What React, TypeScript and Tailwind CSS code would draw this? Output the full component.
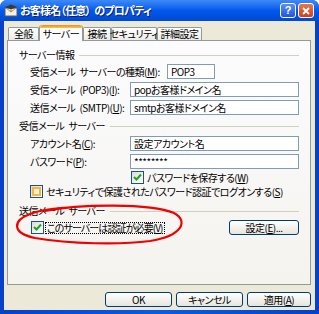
import React from "react";

function U({ c }: { c: string }) {
  return <span className="underline underline-offset-[1px]">{c}</span>;
}

function Sp() {
  return <span className="inline-block w-[4px]" />;
}

function Check({ checked, focus }: { checked?: boolean; focus?: boolean }) {
  return (
    <span className="relative flex-none w-[13px] h-[13px] border border-[#1C5180] bg-gradient-to-br from-[#DCDCD7] to-white flex items-center justify-center">
      {focus && <span className="absolute inset-[1px] border-2 border-[#F8B636]" />}
      {checked && (
        <svg width="9" height="9" viewBox="0 0 9 9" className="relative">
          <path d="M1 4 L3.5 6.5 L8 1.5" stroke="#21A121" strokeWidth="2" fill="none" />
        </svg>
      )}
    </span>
  );
}

function Input({ text, className }: { text: string; className?: string }) {
  return (
    <div className={"h-[15px] border border-[#7F9DB9] bg-white flex items-center px-[3px] leading-none whitespace-nowrap overflow-hidden " + (className ?? "")}>
      {text}
    </div>
  );
}

function Header({ children }: { children: React.ReactNode }) {
  return (
    <div className="h-[14px] flex items-center gap-[5px] leading-none">
      <span className="flex-none whitespace-nowrap">{children}</span>
      <span className="flex-1 h-px bg-[#D0D0BF]" />
    </div>
  );
}

function Btn({ children, className }: { children: React.ReactNode; className?: string }) {
  return (
    <div className={"h-[15px] border border-[#003C74] rounded-[3px] bg-gradient-to-b from-white to-[#E6E5DE] flex items-center justify-center leading-none whitespace-nowrap " + (className ?? "")}>
      {children}
    </div>
  );
}

function Tab({ label, w, selected }: { label: string; w: string; selected?: boolean }) {
  if (selected) {
    return (
      <div className={"relative z-10 -mb-px h-[16px] flex flex-col bg-[#FCFCFE] border-x border-[#919B9C] rounded-t-[3px] " + w}>
        <div className="h-[3px] rounded-t-[3px] bg-gradient-to-b from-[#E68B2C] to-[#FFC73C]" />
        <div className="flex-1 flex items-center justify-center leading-none pb-[1px] whitespace-nowrap">{label}</div>
      </div>
    );
  }
  return (
    <div className={"h-[13px] border border-b-0 border-[#919B9C] rounded-t-[2px] bg-gradient-to-b from-white to-[#ECEBE6] flex items-center justify-center leading-none whitespace-nowrap " + w}>
      {label}
    </div>
  );
}

export default function App() {
  return (
    <div className="relative w-[319px] h-[314px] bg-white font-['Noto_Sans_CJK_JP','Noto_Sans',sans-serif] [font-feature-settings:'palt'] text-black text-[10px] tracking-[-0.5px]">
      <div className="w-[319px] h-[314px] flex flex-col rounded-t-[7px] bg-gradient-to-r from-[#0840C8] via-[#0A5AE8] to-[#0840C8]">
        {/* title bar */}
        <div className="h-[21px] flex-none flex items-center rounded-t-[7px] bg-gradient-to-b from-[#3D8AF7] via-[#0058EE] to-[#0049D0] pl-[4px] pr-[5px]">
          <svg width="14" height="13" viewBox="0 0 14 13" className="flex-none">
            <rect x="1" y="4" width="12" height="8" fill="#F4F1E4" stroke="#5A5A5A" strokeWidth="1" />
            <path d="M2 4 L7 8 L12 4" stroke="#8A8A8A" fill="none" />
            <path d="M1 3 L7 0.5 L13 3 L7 5.5 Z" fill="#3A3A3A" />
            <rect x="6" y="5" width="2" height="2" fill="#E0B030" />
          </svg>
          <span className="ml-[2px] text-white font-bold text-[11px] tracking-[-0.8px] leading-none [text-shadow:1px_1px_0_#0A1E6E] whitespace-nowrap">
            お客様名（任意）<Sp />のプロパティ
          </span>
          <div className="ml-auto flex gap-[2px]">
            <div className="w-[16px] h-[15px] rounded-[3px] border border-white bg-gradient-to-b from-[#5A8EF5] to-[#1F55DF] flex items-center justify-center text-white text-[11px] font-bold leading-none tracking-normal font-['Liberation_Sans',sans-serif]">
              ?
            </div>
            <div className="w-[16px] h-[15px] rounded-[3px] border border-white bg-gradient-to-b from-[#E9774E] to-[#C8401C] flex items-center justify-center">
              <svg width="8" height="8" viewBox="0 0 8 8">
                <path d="M1 1 L7 7 M7 1 L1 7" stroke="white" strokeWidth="1.8" />
              </svg>
            </div>
          </div>
        </div>

        {/* client */}
        <div className="flex-1 mx-[4px] mb-[4px] bg-[#ECE9D8] flex flex-col pl-[3px] pr-[4px] pt-[4px]">
          {/* tabs */}
          <div className="h-[15px] flex items-end pl-[1px]">
            <Tab label="全般" w="w-[31px]" />
            <Tab label="サーバー" w="w-[44px]" selected />
            <Tab label="接続" w="w-[28px]" />
            <Tab label="セキュリティ" w="w-[46px]" />
            <Tab label="詳細設定" w="w-[45px]" />
          </div>

          {/* panel */}
          <div className="h-[245px] border border-[#919B9C] bg-gradient-to-b from-[#FCFCFE] to-[#F4F3EE] px-[11px] pt-[7px] flex flex-col">
            <Header>サーバー情報</Header>
            <div className="pl-[11px] flex flex-col gap-[3px] mt-[2px] leading-none">
              <div className="h-[15px] flex items-center">
                <span className="w-[137px] flex-none whitespace-nowrap">
                  受信メール<Sp />サーバーの種類(<U c="M" />):
                </span>
                <Input text="POP3" className="w-[48px]" />
              </div>
              <div className="h-[15px] flex items-center">
                <span className="w-[100px] flex-none whitespace-nowrap">
                  受信メール<Sp />(POP3)(<U c="I" />):
                </span>
                <Input text="popお客様ドメイン名" className="flex-1" />
              </div>
              <div className="h-[15px] flex items-center">
                <span className="w-[100px] flex-none whitespace-nowrap">
                  送信メール<Sp />(SMTP)(<U c="U" />):
                </span>
                <Input text="smtpお客様ドメイン名" className="flex-1" />
              </div>
            </div>

            <div className="mt-[4px]">
              <Header>
                受信メール<Sp />サーバー
              </Header>
            </div>
            <div className="pl-[11px] flex flex-col mt-[3px] leading-none">
              <div className="h-[15px] flex items-center">
                <span className="w-[100px] flex-none whitespace-nowrap">
                  アカウント名(<U c="C" />):
                </span>
                <Input text="設定アカウント名" className="flex-1" />
              </div>
              <div className="h-[15px] flex items-center mt-[3px]">
                <span className="w-[100px] flex-none whitespace-nowrap">
                  パスワード(<U c="P" />):
                </span>
                <Input text="********" className="flex-1" />
              </div>
              <div className="h-[13px] flex items-center mt-[2px] pl-[101px] gap-[3px]">
                <Check checked />
                <span className="whitespace-nowrap leading-[10px]">
                  パスワードを保存する(<U c="W" />)
                </span>
              </div>
              <div className="h-[13px] flex items-center gap-[3px] mt-[1px]">
                <Check focus />
                <span className="whitespace-nowrap leading-[10px]">
                  セキュリティで保護されたパスワード認証でログオンする(<U c="S" />)
                </span>
              </div>
            </div>

            <div className="mt-[6px]">
              <Header>
                送信メール<Sp />サーバー
              </Header>
            </div>
            <div className="pl-[12px] mt-[2px] h-[15px] flex items-center leading-none">
              <Check checked />
              <span className="ml-[2px] px-[1px] outline-1 outline-dotted outline-black whitespace-nowrap tracking-[-0.9px]">
                このサーバーは認証が必要(<U c="V" />)
              </span>
              <Btn className="ml-auto w-[70px]">
                設定(<U c="E" />)...
              </Btn>
            </div>
          </div>

          {/* buttons */}
          <div className="mt-[7px] flex justify-end gap-[4px]">
            <Btn className="w-[67px]">OK</Btn>
            <Btn className="w-[67px]">キャンセル</Btn>
            <Btn className="w-[64px]">
              適用(<U c="A" />)
            </Btn>
          </div>
        </div>
      </div>

      {/* red hand-drawn ellipse */}
      <svg className="absolute left-0 top-0 pointer-events-none" width="319" height="314" viewBox="0 0 319 314">
        <path
          d="M45 211 C 80 204, 150 203, 174 213 C 189 221, 182 236, 150 241 C 120 245, 70 244, 35 238 C 12 233, 12 221, 30 214 C 40 210, 55 208, 75 207"
          stroke="#F00000"
          strokeWidth="2.2"
          fill="none"
          strokeLinecap="round"
        />
      </svg>
    </div>
  );
}
